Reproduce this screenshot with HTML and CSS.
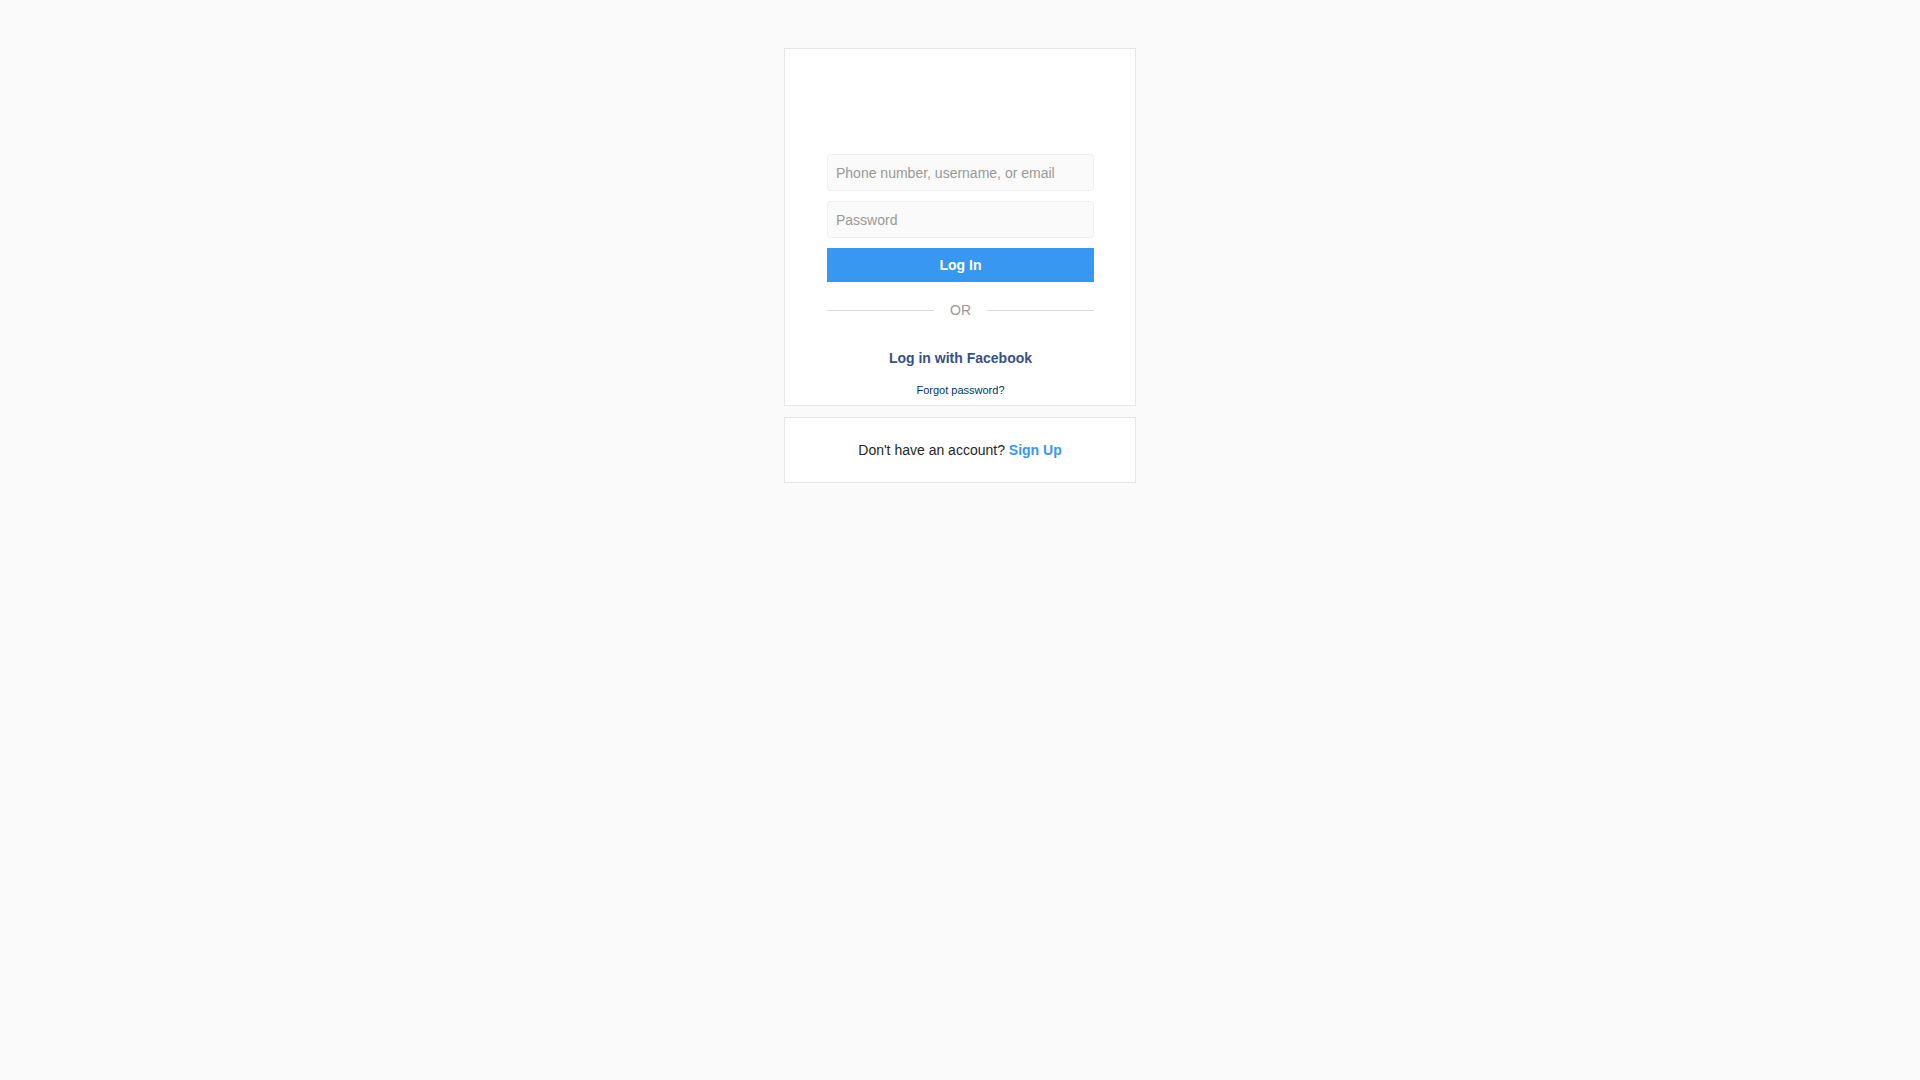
FILE: index.html
```html
<!DOCTYPE html>
<html lang="en">
<head>
<meta charset="utf-8">
<title>Login</title>
<link rel="stylesheet" href="styles.css">
</head>
<body>
<main class="page">
  <section class="card login-card">
    <div class="logo-space"></div>
    <form class="login-form">
      <input class="field" type="text" placeholder="Phone number, username, or email">
      <input class="field" type="password" placeholder="Password">
      <button class="login-btn" type="button">Log In</button>
      <div class="divider">
        <span class="divider-line"></span>
        <span class="divider-text">OR</span>
        <span class="divider-line"></span>
      </div>
      <a class="fb-link" href="#">Log in with Facebook</a>
      <a class="forgot-link" href="#">Forgot password?</a>
    </form>
  </section>
  <section class="card signup-card">
    <p class="signup-text">Don't have an account? <a class="signup-link" href="#">Sign Up</a></p>
  </section>
</main>
</body>
</html>
```

FILE: styles.css
```css
html, body {
  margin: 0;
  padding: 0;
  background: #fafafa;
  font-family: "Liberation Sans", Arial, sans-serif;
  color: #262626;
}

.page {
  display: flex;
  flex-direction: column;
  align-items: center;
  padding-top: 48px;
  gap: 11px;
}

.card {
  width: 352px;
  box-sizing: border-box;
  background: #ffffff;
  border: 1px solid #e6e6e6;
}

.login-card {
  height: 358px;
}

.logo-space {
  height: 105px;
}

.login-form {
  display: flex;
  flex-direction: column;
  padding: 0 41px 0 42px;
}

.field {
  display: block;
  box-sizing: border-box;
  width: 100%;
  height: 37px;
  margin: 0 0 10px 0;
  padding: 0 8px;
  background: #fafafa;
  border: 1px solid #efefef;
  border-radius: 3px;
  font-family: "Liberation Sans", Arial, sans-serif;
  font-size: 14px;
  color: #262626;
  outline: none;
}

.field::placeholder {
  color: #999999;
  opacity: 1;
}

.login-btn {
  display: block;
  width: 100%;
  height: 34px;
  margin: 0;
  padding: 0;
  border: none;
  border-radius: 0;
  background: #3897f0;
  color: #ffffff;
  font-family: "Liberation Sans", Arial, sans-serif;
  font-size: 14px;
  font-weight: bold;
  cursor: pointer;
}

.divider {
  display: flex;
  align-items: center;
  margin-top: 19px;
  height: 18px;
}

.divider-line {
  flex: 1;
  height: 1px;
  background: #dbdbdb;
}

.divider-text {
  margin: 0 16px;
  font-size: 14px;
  line-height: 18px;
  color: #999999;
}

.fb-link {
  display: block;
  margin-top: 30px;
  text-align: center;
  font-size: 14px;
  line-height: 18px;
  font-weight: bold;
  color: #385185;
  text-decoration: none;
}

.forgot-link {
  display: block;
  margin-top: 16px;
  text-align: center;
  font-size: 11px;
  line-height: 14px;
  color: #003569;
  text-decoration: none;
}

.signup-card {
  height: 66px;
  display: flex;
  align-items: center;
  justify-content: center;
}

.signup-text {
  margin: 0;
  font-size: 14px;
  line-height: 18px;
  color: #262626;
}

.signup-link {
  color: #3897f0;
  font-weight: bold;
  text-decoration: none;
}
```
